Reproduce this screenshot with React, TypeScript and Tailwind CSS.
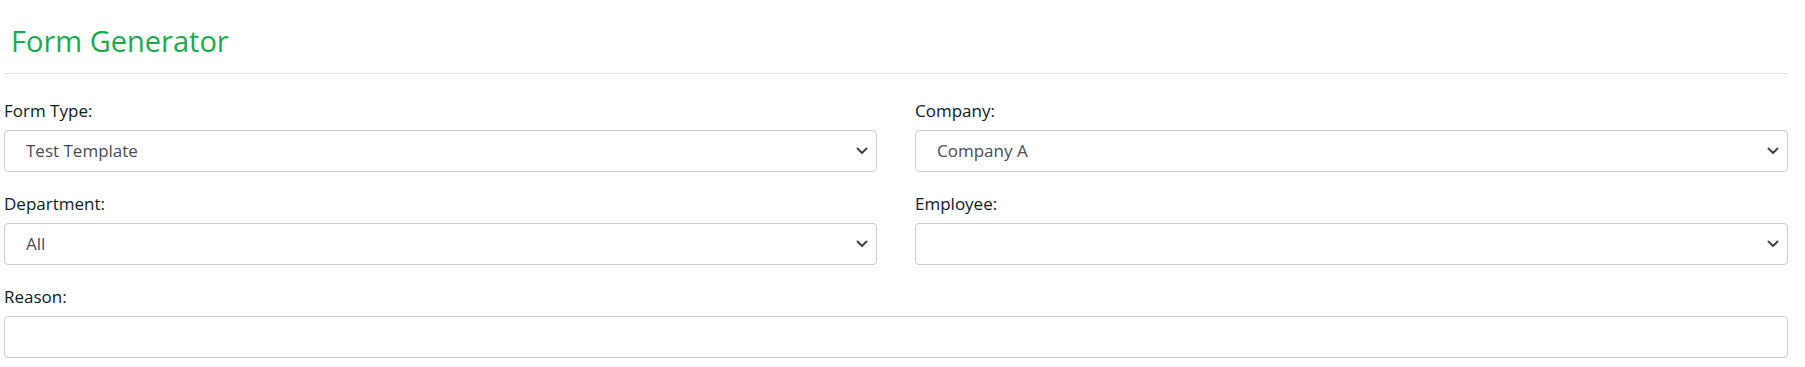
import React from "react";

const Chevron = () => (
  <svg
    className="pointer-events-none absolute right-[9px] top-1/2 h-[8px] w-[12px] -translate-y-1/2"
    viewBox="0 0 12 8"
    fill="none"
  >
    <path d="M1.5 1.5 L6 6 L10.5 1.5" stroke="#444" strokeWidth="2" strokeLinecap="round" strokeLinejoin="round" />
  </svg>
);

const SelectField = ({ label, value, options }: { label: string; value: string; options: string[] }) => (
  <div className="flex flex-col">
    <label className="mb-[7px] text-[17px] leading-[24px] text-[#0c201c]">{label}</label>
    <div className="relative">
      <select
        defaultValue={value}
        className="h-[42px] w-full appearance-none rounded-[4px] border border-[#cdcdcd] bg-white pl-[21px] pr-8 text-[17px] text-[#4b4b55] outline-none"
      >
        {options.map((o) => (
          <option key={o} value={o}>
            {o}
          </option>
        ))}
      </select>
      <Chevron />
    </div>
  </div>
);

export default function App() {
  return (
    <div className="min-h-[367px] bg-white pl-[4px] pr-[17px] font-['Open_Sans',sans-serif]">
      <div className="pl-[7px] pt-[22px]">
        <h1 className="text-[29px] font-normal leading-[38px] text-[#1aab4b]">Form Generator</h1>
      </div>
      <div className="mt-[13px] border-t border-[#e3e3e3]" />

      <div className="mt-[25px] grid grid-cols-2 gap-x-[38px] gap-y-[20px]">
        <SelectField label="Form Type:" value="Test Template" options={["Test Template"]} />
        <SelectField label="Company:" value="Company A" options={["Company A"]} />
        <SelectField label="Department:" value="All" options={["All"]} />
        <SelectField label="Employee:" value="" options={[""]} />
        <div className="col-span-2 flex flex-col">
          <label className="mb-[7px] text-[17px] leading-[24px] text-[#0c201c]">Reason:</label>
          <input
            type="text"
            className="h-[42px] w-full rounded-[4px] border border-[#cdcdcd] bg-white px-[21px] text-[17px] text-[#4b4b55] outline-none"
          />
        </div>
      </div>
    </div>
  );
}
